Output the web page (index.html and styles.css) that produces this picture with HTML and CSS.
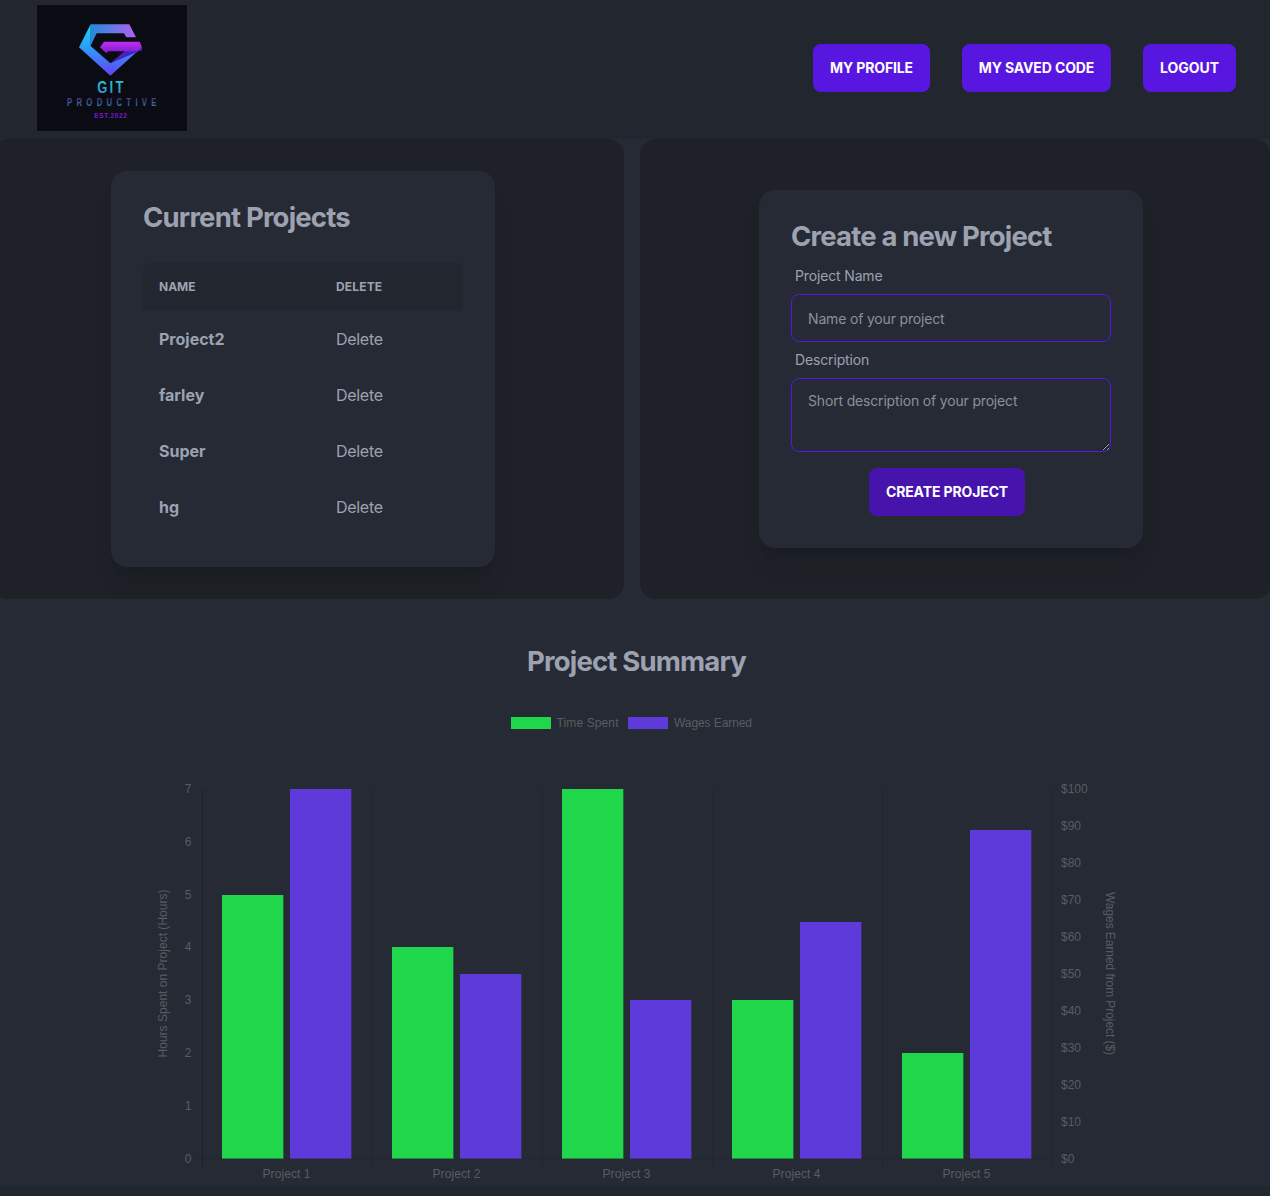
FILE: index.html
```html
<!DOCTYPE html>
<html lang="en">
<head>
<meta charset="utf-8">
<title>Git Productive</title>
<link rel="stylesheet" href="styles.css">
</head>
<body>
<header class="navbar">
  <a class="brand" aria-label="Git Productive">
    <svg class="logo" viewBox="0 0 450 378">
      <defs>
        <linearGradient id="top" x1="0" x2="1"><stop offset="0" stop-color="#2489d8"/><stop offset=".5" stop-color="#6878e5"/><stop offset="1" stop-color="#b65cf5"/></linearGradient>
        <linearGradient id="left" x1="0" y1="0" x2="0" y2="1"><stop offset="0" stop-color="#14d9f4"/><stop offset=".45" stop-color="#2c9dfa"/><stop offset="1" stop-color="#6542f5"/></linearGradient>
        <linearGradient id="bar" x1="0" y1="0" x2="0" y2="1"><stop offset="0" stop-color="#c22cf0"/><stop offset="1" stop-color="#7a1fd2"/></linearGradient>
        <linearGradient id="word" x1="0" y1="0" x2="0" y2="1"><stop offset="0" stop-color="#20d5d5"/><stop offset="1" stop-color="#3d7fc4"/></linearGradient>
        <linearGradient id="sub" x1="0" y1="0" x2="0" y2="1"><stop offset=".2" stop-color="#4c3a86"/><stop offset=".8" stop-color="#2480a0"/></linearGradient>
      </defs>
      <rect width="450" height="378" fill="#0a0b13"/>
      <path d="M161 58H277L297 97H268L261 85H179L161 122Z" fill="url(#top)"/>
      <path d="M161 58L126 127L220 212L315 127L220 175L160 122L161 122Z" fill="url(#left)"/>
      <path d="M220 175L264 137H315V127L303 140Z" fill="#4c20bd"/>
      <path d="M201 110H308L315 127L303 139H215L207 144L189 127Z" fill="url(#bar)"/>
      <text class="logo-name" transform="translate(181 264) scale(.75 1)" textLength="104" fill="url(#word)">GIT</text>
      <text class="logo-sub" transform="translate(90 303) scale(.75 1)" textLength="358" fill="url(#sub)">PRODUCTIVE</text>
      <text class="logo-est" transform="translate(172 338) scale(.8 1)" textLength="122">EST.2022</text>
    </svg>
  </a>
  <nav class="menu">
    <button class="btn btn-profile">MY PROFILE</button>
    <button class="btn btn-saved">MY SAVED CODE</button>
    <button class="btn btn-logout">LOGOUT</button>
  </nav>
</header>
<main>
  <div class="panels">
    <section class="panel">
      <div class="card card-list">
        <h2 class="title title-list">Current Projects</h2>
        <table class="projects">
          <thead><tr><th>NAME</th><th>DELETE</th></tr></thead>
          <tbody>
            <tr><th>Project2</th><td>Delete</td></tr>
            <tr><th>farley</th><td>Delete</td></tr>
            <tr><th>Super</th><td>Delete</td></tr>
            <tr><th>hg</th><td>Delete</td></tr>
          </tbody>
        </table>
      </div>
    </section>
    <section class="panel">
      <form class="card card-form">
        <h2 class="title title-form">Create a new Project</h2>
        <label class="label" for="name">Project Name</label>
        <input class="field" id="name" placeholder="Name of your project">
        <label class="label" for="desc">Description</label>
        <textarea class="field area" id="desc" placeholder="Short description of your project"></textarea>
        <button class="btn btn-create" type="button">CREATE PROJECT</button>
      </form>
    </section>
  </div>
  <section class="summary">
    <h2 class="title title-summary">Project Summary</h2>
    <svg class="chart" viewBox="150 700 980 486">
      <g class="green"><rect x="511" y="717" width="40" height="12"/></g>
      <g class="purple"><rect x="628" y="717" width="40" height="12"/></g>
      <text x="556.5" y="727" textLength="62">Time Spent</text>
      <text x="674" y="727" textLength="78">Wages Earned</text>
      <path class="grid" d="M372.5 789V1168M542.5 789V1168M712.5 789V1168M882.5 789V1168M1051.5 789V1168M194 1158.5H1052"/>
      <path class="axis" d="M202.5 789V1168"/>
      <g class="green">
        <rect x="222" y="895" width="61" height="264"/><rect x="392" y="947" width="61" height="212"/><rect x="562" y="789" width="61" height="370"/><rect x="732" y="1000" width="61" height="159"/><rect x="902" y="1053" width="61" height="106"/>
      </g>
      <g class="purple">
        <rect x="290" y="789" width="61" height="370"/><rect x="460" y="974" width="61" height="185"/><rect x="630" y="1000" width="61" height="159"/><rect x="800" y="922" width="61" height="237"/><rect x="970" y="830" width="61" height="329"/>
      </g>
      <path class="edge edge-green" d="M283.5 895V1159M453.5 947V1159M623.5 789V1159M793.5 1000V1159M963.5 1053V1159"/>
      <path class="edge edge-purple" d="M351.5 789V1159M521.5 974V1159M691.5 1000V1159M861.5 922V1159M1031.5 830V1159"/>
      <path class="edge edge-base" d="M222 1158.5H283M290 1158.5H351M392 1158.5H453M460 1158.5H521M562 1158.5H623M630 1158.5H691M732 1158.5H793M800 1158.5H861M902 1158.5H963M970 1158.5H1031"/>
      <g class="end">
        <text x="191.5" y="793">7</text><text x="191.5" y="846">6</text><text x="191.5" y="899">5</text><text x="191.5" y="951">4</text><text x="191.5" y="1004">3</text><text x="191.5" y="1057">2</text><text x="191.5" y="1110">1</text><text x="191.5" y="1163">0</text>
      </g>
      <g>
        <text x="1061" y="793">$100</text><text x="1061" y="830">$90</text><text x="1061" y="867">$80</text><text x="1061" y="904">$70</text><text x="1061" y="941">$60</text><text x="1061" y="978">$50</text><text x="1061" y="1015">$40</text><text x="1061" y="1052">$30</text><text x="1061" y="1089">$20</text><text x="1061" y="1126">$10</text><text x="1061" y="1163">$0</text>
      </g>
      <g class="mid">
        <text x="286.5" y="1178" textLength="48">Project 1</text><text x="456.5" y="1178" textLength="48">Project 2</text><text x="626.5" y="1178" textLength="48">Project 3</text><text x="796.5" y="1178" textLength="48">Project 4</text><text x="966.5" y="1178" textLength="48">Project 5</text>
        <text transform="translate(167 973.5) rotate(-90)" textLength="168">Hours Spent on Project (Hours)</text>
        <text transform="translate(1106 973.5) rotate(90)" textLength="163">Wages Earned from Project ($)</text>
      </g>
    </svg>
  </section>
</main>
<footer class="footer"></footer>
</body>
</html>
```
FILE: styles.css
```css
* { box-sizing: border-box; }
body {
  margin: 0;
  height: 1196px;
  display: flex;
  flex-direction: column;
  overflow: hidden;
  background: #262a35;
  color: #9ca2b0;
  font-family: Inter, sans-serif;
  font-size: 16px;
  line-height: 24px;
}
.navbar {
  height: 139px;
  padding: 0 34px 3px 37px;
  display: flex;
  align-items: center;
  justify-content: space-between;
  background: #22262e;
}
.logo { display: block; width: 150px; height: 126px; }
.logo-name { font: bold 52px "Liberation Sans", sans-serif; }
.logo-sub { font: bold 31px "Liberation Sans", sans-serif; }
.logo-est { font: bold 24px "Liberation Sans", sans-serif; fill: #7d18cf; }
.menu { display: flex; gap: 32px; }
.btn {
  height: 48px;
  padding: 0;
  border: 0;
  border-radius: 8px;
  background: #5717e0;
  color: #fff;
  font: 700 14px/14px Inter, sans-serif;
  letter-spacing: -.12px;
  white-space: nowrap;
}
.btn-profile { width: 117px; }
.btn-saved { width: 149px; }
.btn-logout { width: 93px; letter-spacing: -.05px; }
.panels {
  height: 460px;
  margin: 0 -1px 0 -8px;
  display: grid;
  grid-template-columns: 632px 1fr;
  gap: 16px;
}
.panel {
  display: flex;
  align-items: center;
  padding-left: 119px;
  border-radius: 16px;
  background: #1e2228;
  overflow: hidden;
}
.card {
  width: 384px;
  padding: 32px;
  display: flex;
  flex-direction: column;
  border-radius: 16px;
  background: #262a35;
  box-shadow: 0 20px 25px -5px rgba(0, 0, 0, .1), 0 8px 10px -6px rgba(0, 0, 0, .1);
}
.card-list { height: 396px; }
.card-form { height: 358px; }
.title { margin: 0; height: 28px; font-size: 27.5px; line-height: 29px; font-weight: 650; letter-spacing: -.82px; white-space: nowrap; }
.projects { margin-top: 32px; width: 100%; border-collapse: separate; border-spacing: 0; text-align: left; table-layout: fixed; }
.projects th, .projects td { height: 56px; padding: 0 16px; }
.projects td { font-weight: 400; letter-spacing: -.3px; }
.projects tbody th { font-weight: 700; }
.projects th:first-child { width: 177px; }
.projects thead th { height: 48px; background: #22262e; font-size: 12px; font-weight: 700; line-height: 16px; }
.projects thead th:first-child { border-top-left-radius: 8px; }
.projects thead th:last-child { border-top-right-radius: 8px; letter-spacing: .15px; }
.label { height: 36px; padding: 8px 4px; font-size: 14px; line-height: 20px; letter-spacing: -.15px; }
.title-form + .label { margin-top: 8px; }
.field {
  width: 100%;
  height: 48px;
  padding: 1px 16px 0;
  border: 1px solid #5717e0;
  border-radius: 8px;
  background: transparent;
  color: inherit;
  font: 14px/28px Inter, sans-serif;
  letter-spacing: -.17px;
  flex: none;
}
.field::placeholder { color: #8b909d; opacity: 1; }
.area { height: 74px; padding-top: 8px; resize: vertical; }
.btn-create { width: 156px; flex: none; margin: 16px 0 0 78px; background: #4614ad; }
.summary { display: flex; flex-direction: column; align-items: center; padding-top: 48px; height: 587px; }
.title-summary { margin-left: 3px; }
.chart { width: 980px; height: 486px; margin: 25px 0 0 10px; flex: none; }
.chart text { font: 12px "Liberation Sans", sans-serif; fill: #5b5c60; }
.chart .end text { text-anchor: end; }
.chart .mid text { text-anchor: middle; }
.green { fill: #20d64a; }
.purple { fill: #5f3adb; }
.grid { stroke: #22262f; fill: none; }
.axis { stroke: #1d2028; fill: none; }
.edge { fill: none; }
.edge-green { stroke: #23803f; stroke-opacity: .7; }
.edge-purple { stroke: #433288; stroke-opacity: .7; }
.edge-base { stroke: #262a35; stroke-opacity: .45; }
.footer { height: 10px; background: #22262e; }
```
